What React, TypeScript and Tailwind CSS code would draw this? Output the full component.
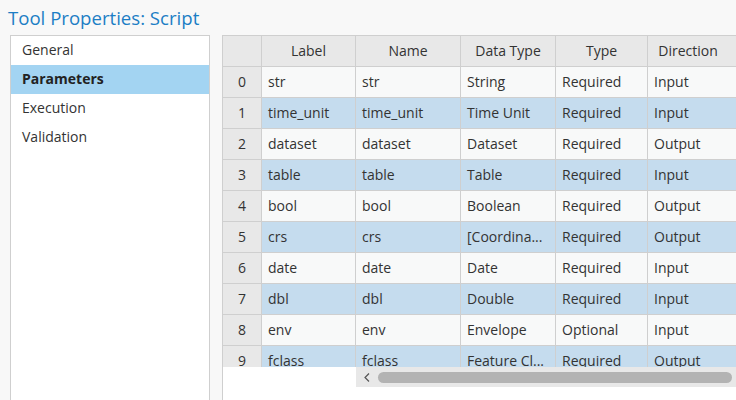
const rows = [
  ['str', 'str', 'String', 'Required', 'Input'],
  ['time_unit', 'time_unit', 'Time Unit', 'Required', 'Input'],
  ['dataset', 'dataset', 'Dataset', 'Required', 'Output'],
  ['table', 'table', 'Table', 'Required', 'Input'],
  ['bool', 'bool', 'Boolean', 'Required', 'Output'],
  ['crs', 'crs', '[Coordina...', 'Required', 'Output'],
  ['date', 'date', 'Date', 'Required', 'Input'],
  ['dbl', 'dbl', 'Double', 'Required', 'Input'],
  ['env', 'env', 'Envelope', 'Optional', 'Input'],
  ['fclass', 'fclass', 'Feature Cl...', 'Required', 'Output'],
];

const widths = ['w-[94px]', 'w-[105px]', 'w-[95px]', 'w-[92px]', 'w-[110px]'];
const headers = ['Label', 'Name', 'Data Type', 'Type', 'Direction'];
const navItems = ['General', 'Parameters', 'Execution', 'Validation'];

export default function App() {
  return (
    <div className="w-[736px] h-[400px] overflow-hidden bg-[#f8f8f8] text-[14px] text-[#333333] font-['Open_Sans','Noto_Sans',sans-serif]">
      <div className="h-[35px] pl-[8px] pt-[4px] text-[18.6px] leading-[28px] text-[#1c7ec5]">
        Tool Properties: Script
      </div>

      <div className="flex h-[365px]">
        {/* side nav */}
        <div className="ml-[10px] w-[200px] h-full border border-b-0 border-[#cfcfcf] bg-white">
          {navItems.map((item) => (
            <div
              key={item}
              className={
                item === 'Parameters'
                  ? 'h-[29px] pl-[11px] leading-[28px] bg-[#a3d4f2] font-bold text-[#222]'
                  : 'h-[29px] pl-[11px] leading-[28px]'
              }
            >
              {item}
            </div>
          ))}
        </div>

        {/* parameters grid */}
        <div className="ml-[12px] flex-1 h-full border-t border-l border-[#cfcfcf] bg-white flex flex-col overflow-hidden">
          <div className="h-[331px] overflow-hidden">
            <div className="flex h-[31px] bg-[#e8e8e8] border-b border-[#cfcfcf]">
              <div className="w-[39px] shrink-0 border-r border-[#cfcfcf]" />
              {headers.map((h, i) => (
                <div
                  key={h}
                  className={`${widths[i]} shrink-0 border-r border-[#cfcfcf] text-center leading-[30px] ${i === 4 ? 'pr-[29px]' : ''}`}
                >
                  {h}
                </div>
              ))}
            </div>
            {rows.map((r, idx) => (
              <div
                key={idx}
                className={`flex h-[31px] border-b border-[#cfcfcf] ${idx % 2 ? 'bg-[#c5dcee]' : 'bg-[#f8f9f9]'}`}
              >
                <div className="w-[39px] shrink-0 border-r border-[#cfcfcf] bg-[#e8e8e8] text-center leading-[30px]">
                  {idx}
                </div>
                {r.map((c, i) => (
                  <div
                    key={i}
                    className={`${widths[i]} shrink-0 border-r border-[#cfcfcf] pl-[6px] leading-[30px] whitespace-nowrap overflow-hidden`}
                  >
                    {c}
                  </div>
                ))}
              </div>
            ))}
          </div>

          {/* horizontal scrollbar */}
          <div className="flex h-[20px]">
            <div className="w-[133px] shrink-0" />
            <div className="flex-1 flex items-center bg-[#e8e8e8]">
              <div className="w-[22px] flex justify-center">
                <svg width="6" height="9" viewBox="0 0 6 9">
                  <polyline points="5,0.5 1,4.5 5,8.5" fill="none" stroke="#555" strokeWidth="1.2" />
                </svg>
              </div>
              <div className="flex-1 h-[11px] mr-[4px] rounded-full bg-[#b3b3b3]" />
            </div>
          </div>
        </div>
      </div>
    </div>
  );
}
